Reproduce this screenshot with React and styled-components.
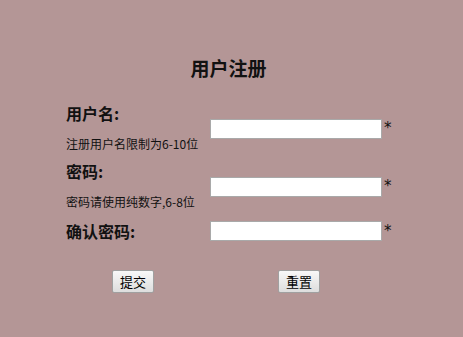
import React from "react"
import styled, { createGlobalStyle } from "styled-components"

const GlobalStyle = createGlobalStyle`
  html, body {
    margin: 0;
    padding: 0;
    background: #b49696;
  }
  body {
    font-family: "Noto Sans CJK SC", "Liberation Sans", sans-serif;
    color: #111;
  }
`

const FIELDS = [
  { label: "用户名:", hint: "注册用户名限制为6-10位", type: "text" },
  { label: "密码:", hint: "密码请使用纯数字,6-8位", type: "password" },
  { label: "确认密码:", hint: null, type: "password" },
]

export default function App() {
  return (
    <>
      <GlobalStyle />
      <Page>
        <Title>用户注册</Title>
        <Form onSubmit={(e) => e.preventDefault()}>
          {FIELDS.map((field) => (
            <Row key={field.label}>
              <LabelCell>
                <Label>{field.label}</Label>
                {field.hint && <Hint>{field.hint}</Hint>}
              </LabelCell>
              <Input type={field.type} />
              <Star>*</Star>
            </Row>
          ))}
          <Buttons>
            <Button type="submit">提交</Button>
            <Button type="reset">重置</Button>
          </Buttons>
        </Form>
      </Page>
    </>
  )
}

const Page = styled.div`
  width: 325px;
  padding: 55px 0 0 66px;
  height: 282px;
`

const Title = styled.h2`
  margin: 0 0 23px;
  font-size: 19px;
  line-height: 26px;
  font-weight: bold;
  text-align: center;
`

const Form = styled.form`
  display: flex;
  flex-direction: column;
  gap: 10px;
`

const Row = styled.div`
  display: grid;
  grid-template-columns: 144px 172px auto;
  align-items: center;
`

const LabelCell = styled.div`
  display: flex;
  flex-direction: column;
  gap: 14px;
`

const Label = styled.div`
  font-size: 16px;
  line-height: 18px;
  font-weight: bold;
`

const Hint = styled.div`
  font-size: 12px;
  line-height: 16px;
`

const Input = styled.input`
  box-sizing: border-box;
  width: 172px;
  height: 20px;
  margin: 1px 0 0;
  padding: 0 2px;
  border: 1px solid #a9a9a9;
  background: #fff;
  outline: none;
`

const Star = styled.span`
  font-family: "DejaVu Sans", sans-serif;
  font-size: 15px;
  line-height: 20px;
  padding-left: 2px;
  align-self: center;
`

const Buttons = styled.div`
  display: grid;
  grid-template-columns: 166px 42px;
  padding: 19px 0 0 46px;
`

const Button = styled.button`
  box-sizing: border-box;
  width: 42px;
  height: 23px;
  padding: 0;
  border: 1px solid #a0a0a0;
  border-radius: 2px;
  background: linear-gradient(#f8f8f8, #dddddd);
  font-family: "Noto Sans CJK SC", sans-serif;
  font-size: 13px;
  color: #000;
`
